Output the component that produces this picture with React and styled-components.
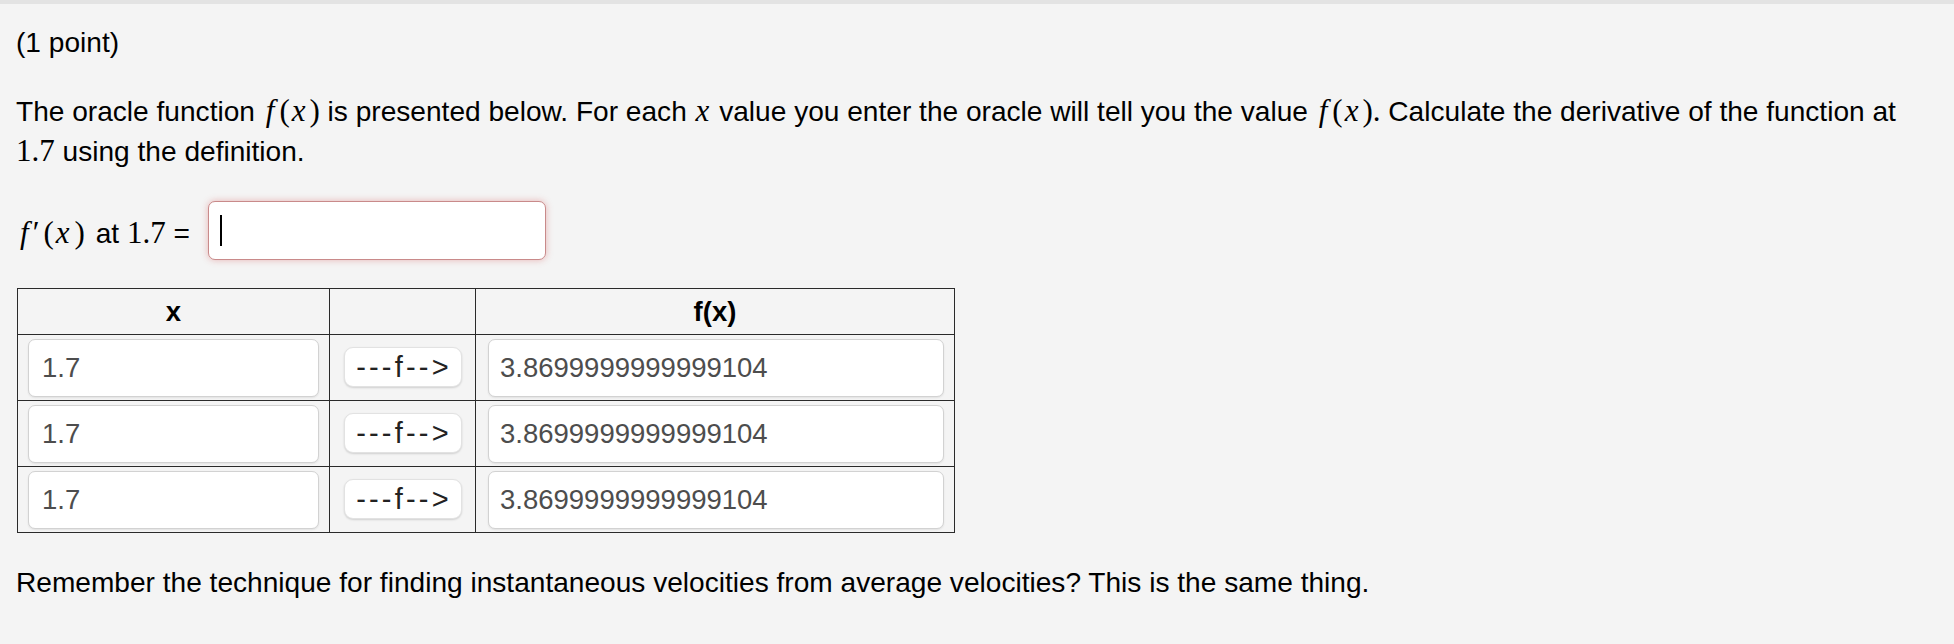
import React from 'react';
import styled, { createGlobalStyle } from 'styled-components';

const GlobalStyle = createGlobalStyle`
  html, body {
    margin: 0;
    padding: 0;
    background: #f4f4f4;
  }
  body {
    font-family: "Liberation Sans", Arial, sans-serif;
    color: #000;
  }
`;

const Page = styled.div`
  box-sizing: border-box;
  min-height: 644px;
  border-top: 4px solid #e3e3e3;
  padding: 0 16px;
  font-size: 28.1px;
  line-height: 40px;
`;

const Text = styled.p`
  margin: ${({ top }) => top}px 0 0 0;
  white-space: nowrap;
`;

// math bits, drawn roughly like MathJax output
const M = styled.span`
  font-family: "Liberation Serif", "Times New Roman", serif;
  font-size: 31px;
  line-height: 1;
  font-style: ${({ it }) => (it ? 'italic' : 'normal')};
  padding: 0 ${({ pr }) => pr || 0}px 0 ${({ pl }) => pl || 0}px;
`;

const Fx = () => (
  <>
    <M it pl={3} pr={5}>f</M><M pr={1}>(</M><M it pl={1} pr={3}>x</M><M pl={1}>)</M>
  </>
);

const AnswerRow = styled.div`
  display: flex;
  align-items: center;
  margin-top: 29px;
  gap: 18px;
`;

const Label = styled.span`
  padding-top: 7px;
  white-space: nowrap;
`;

const AnswerInput = styled.div`
  box-sizing: border-box;
  width: 338px;
  height: 59px;
  background: #fff;
  border: 1.5px solid #c98a8a;
  border-radius: 7px;
  box-shadow: 0 0 7px rgba(210, 60, 60, 0.35);
  display: flex;
  align-items: center;
  padding-left: 11px;
`;

const Caret = styled.span`
  width: 2px;
  height: 31px;
  background: #000;
`;

const Table = styled.table`
  margin-top: 28px;
  border-collapse: collapse;
  width: 937px;
  table-layout: fixed;
  margin-left: 1px;

  th, td {
    border: 1.3px solid #2a2a2a;
    padding: 0;
  }
`;

const Head = styled.th`
  height: 45px;
  font-weight: bold;
  font-size: 27.5px;
  text-align: center;
  vertical-align: middle;
`;

const Cell = styled.td`
  height: 66px;
  box-sizing: border-box;
  padding: 3px ${({ pr }) => pr || 10}px 3px ${({ pl }) => pl || 10}px !important;
  text-align: ${({ center }) => (center ? 'center' : 'left')};
  vertical-align: middle;
`;

const Field = styled.div`
  box-sizing: border-box;
  height: 58px;
  background: #fff;
  border: 1.5px solid #d2d2d2;
  border-radius: 7px;
  box-shadow: 0 1px 2px rgba(0, 0, 0, 0.08);
  display: flex;
  align-items: center;
  padding-left: ${({ pl }) => pl}px;
  color: #4d4d4d;
  font-size: 27.5px;
`;

const Arrow = styled.button`
  box-sizing: border-box;
  width: 118px;
  height: 40px;
  background: #fff;
  border: 1px solid #e2e2e2;
  border-radius: 9px;
  box-shadow: 0 1px 2px rgba(0, 0, 0, 0.15);
  font-family: "Liberation Sans", Arial, sans-serif;
  font-size: 29px;
  letter-spacing: 3.2px;
  color: #222;
  padding: 0 0 0 3px;
  display: inline-flex;
  align-items: center;
  justify-content: center;
`;

const rows = [
  { x: '1.7', fx: '3.8699999999999104' },
  { x: '1.7', fx: '3.8699999999999104' },
  { x: '1.7', fx: '3.8699999999999104' },
];

const App = () => (
  <Page>
    <GlobalStyle />
    <Text top={19}>(1 point)</Text>
    <Text top={29}>
      The oracle function <Fx /> is presented below. For each <M it pl={1} pr={2}>x</M> value you
      enter the oracle will tell you the value <Fx /><M>.</M> Calculate the derivative of the function at
      <br />
      <M>1.7</M> using the definition.
    </Text>
    <AnswerRow>
      <Label>
        <M it pl={4} pr={4}>f</M><M pr={4}>′</M><M pr={1}>(</M><M it pl={1} pr={4}>x</M><M pl={1} pr={3}>)</M> at <M>1.7</M> =
      </Label>
      <AnswerInput>
        <Caret />
      </AnswerInput>
    </AnswerRow>
    <Table>
      <colgroup>
        <col style={{ width: 312 }} />
        <col style={{ width: 146 }} />
        <col style={{ width: 479 }} />
      </colgroup>
      <thead>
        <tr>
          <Head>x</Head>
          <Head />
          <Head>f(x)</Head>
        </tr>
      </thead>
      <tbody>
        {rows.map((r, i) => (
          <tr key={i}>
            <Cell>
              <Field pl={13}>{r.x}</Field>
            </Cell>
            <Cell center>
              <Arrow>---f--&gt;</Arrow>
            </Cell>
            <Cell pl={12}>
              <Field pl={11}>{r.fx}</Field>
            </Cell>
          </tr>
        ))}
      </tbody>
    </Table>
    <Text top={30}>
      Remember the technique for finding instantaneous velocities from average velocities? This is the same thing.
    </Text>
  </Page>
);

export default App;
